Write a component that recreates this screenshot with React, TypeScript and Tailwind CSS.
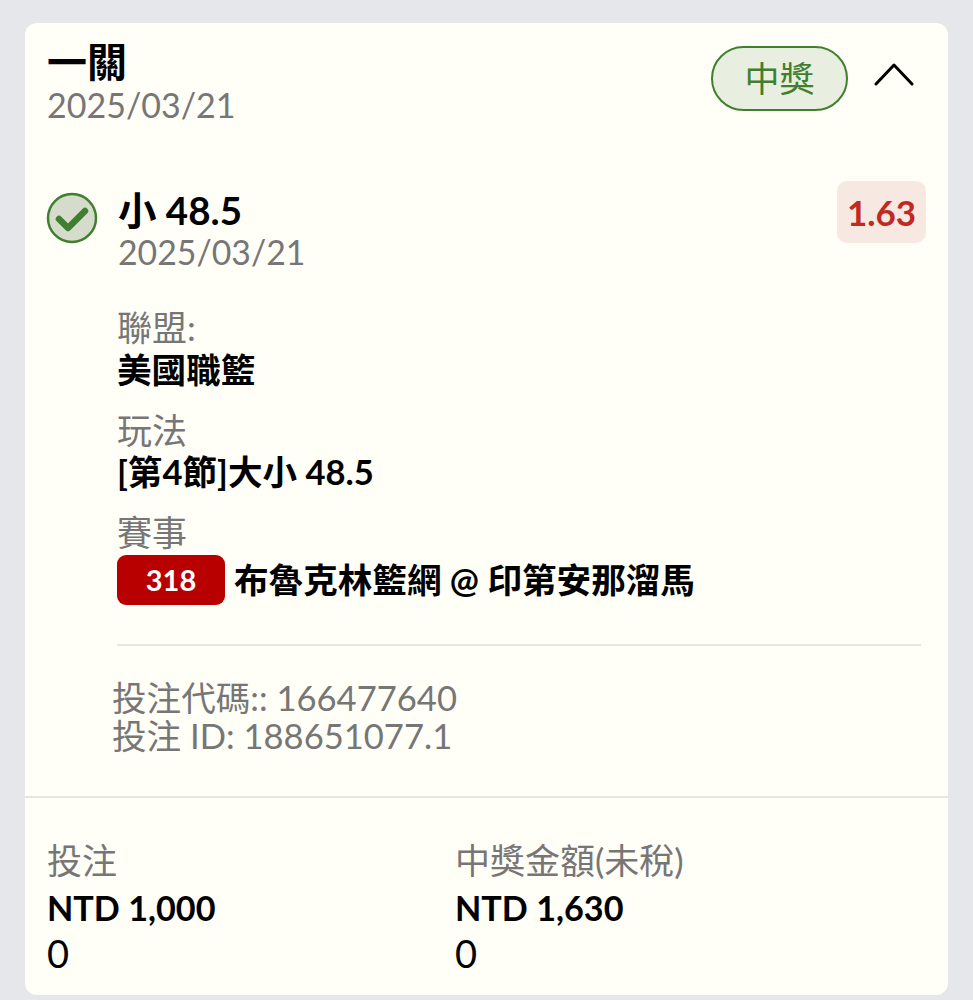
const font = { fontFamily: "Lato, 'Noto Sans CJK TC', sans-serif" };

function Field({ label, value, labelClass }: { label: string; value: string; labelClass: string }) {
  return (
    <div>
      <div className={labelClass + " text-[35px] text-[#767676]"}>{label}</div>
      <div className="text-[34.6px] leading-[42px] font-bold text-black">{value}</div>
    </div>
  );
}

function Stake({ label, value }: { label: string; value: string }) {
  return (
    <div className="w-[408px]">
      <div className="text-[35px] leading-[50px] text-[#767676]">{label}</div>
      <div className="text-[34.2px] leading-[45px] font-bold text-black">{value}</div>
      <div className="text-[38px] leading-[46px] text-black">0</div>
    </div>
  );
}

export default function App() {
  return (
    <div className="h-[1000px] w-[973px] overflow-hidden bg-[#e5e7eb] px-[25px] pt-[23px]" style={font}>
      <div className="h-[972px] w-[923px] rounded-[12px] bg-[#fffef7]">
        <div className="flex items-start justify-between pl-[22px] pr-[34px] pt-[16px]">
          <div>
            <div className="text-[40px] leading-[46px] font-bold text-black">一關</div>
            <div className="text-[34px] leading-[40px] text-[#767676]">2025/03/21</div>
          </div>
          <div className="flex items-center gap-[26px] pt-[7px]">
            <div className="flex h-[65px] w-[137px] items-center justify-center rounded-full border-[2.5px] border-[#3f7f2f] bg-[#e9efe0] text-[35px] text-[#3f7f2f]">
              中獎
            </div>
            <svg className="mb-[10px]" width="40" height="24" viewBox="0 0 40 24" fill="none" stroke="black" strokeWidth="3" strokeLinecap="round" strokeLinejoin="round">
              <path d="M2 22 L20 3 L38 22" />
            </svg>
          </div>
        </div>

        <div className="flex items-start justify-between pl-[21px] pr-[22px] pt-[56px]">
          <div className="flex gap-[20px]">
            <svg className="mt-[11px]" width="52" height="52" viewBox="0 0 52 52" fill="none">
              <circle cx="26" cy="26" r="24" fill="#d5dccb" stroke="#3f7f2f" strokeWidth="2.5" />
              <path d="M13 27 L22 36 L39 19" stroke="#3f7f2f" strokeWidth="6.5" strokeLinecap="round" strokeLinejoin="round" />
            </svg>
            <div className="pt-[6px]">
              <div className="text-[38.5px] leading-[46px] font-bold text-black">小 48.5</div>
              <div className="text-[33.8px] leading-[38px] text-[#767676]">2025/03/21</div>
            </div>
          </div>
          <div className="flex h-[62px] w-[89px] items-center justify-center rounded-[10px] bg-[#f7e8e2] text-[35px] font-bold text-[#bf2a22]">
            1.63
          </div>
        </div>

        <div className="flex flex-col gap-[18px] pl-[92px] pt-[35px]">
          <Field label="聯盟:" value="美國職籃" labelClass="leading-[43px]" />
          <Field label="玩法" value="[第4節]大小 48.5" labelClass="leading-[42px]" />
          <div>
            <div className="text-[35px] leading-[42px] text-[#767676]">賽事</div>
            <div className="flex items-center gap-[9px] pt-[1px]">
              <div className="flex h-[50px] w-[108px] items-center justify-center rounded-[9px] bg-[#b90000] text-[29px] font-bold text-white">
                318
              </div>
              <div className="text-[34.6px] font-bold text-black">布魯克林籃網 @ 印第安那溜馬</div>
            </div>
          </div>
        </div>

        <div className="ml-[92px] mr-[27px] mt-[38px] h-[2px] bg-[#e6e5de]" />

        <div className="pl-[87px] pt-[33px] text-[34.6px] leading-[38px] text-[#767676]">
          <div>投注代碼:: 166477640</div>
          <div>投注 ID: 188651077.1</div>
        </div>

        <div className="mt-[41px] h-[2px] bg-[#e6e5de]" />

        <div className="flex pl-[22px] pt-[37px]">
          <Stake label="投注" value="NTD 1,000" />
          <Stake label="中獎金額(未稅)" value="NTD 1,630" />
        </div>
      </div>
    </div>
  );
}
